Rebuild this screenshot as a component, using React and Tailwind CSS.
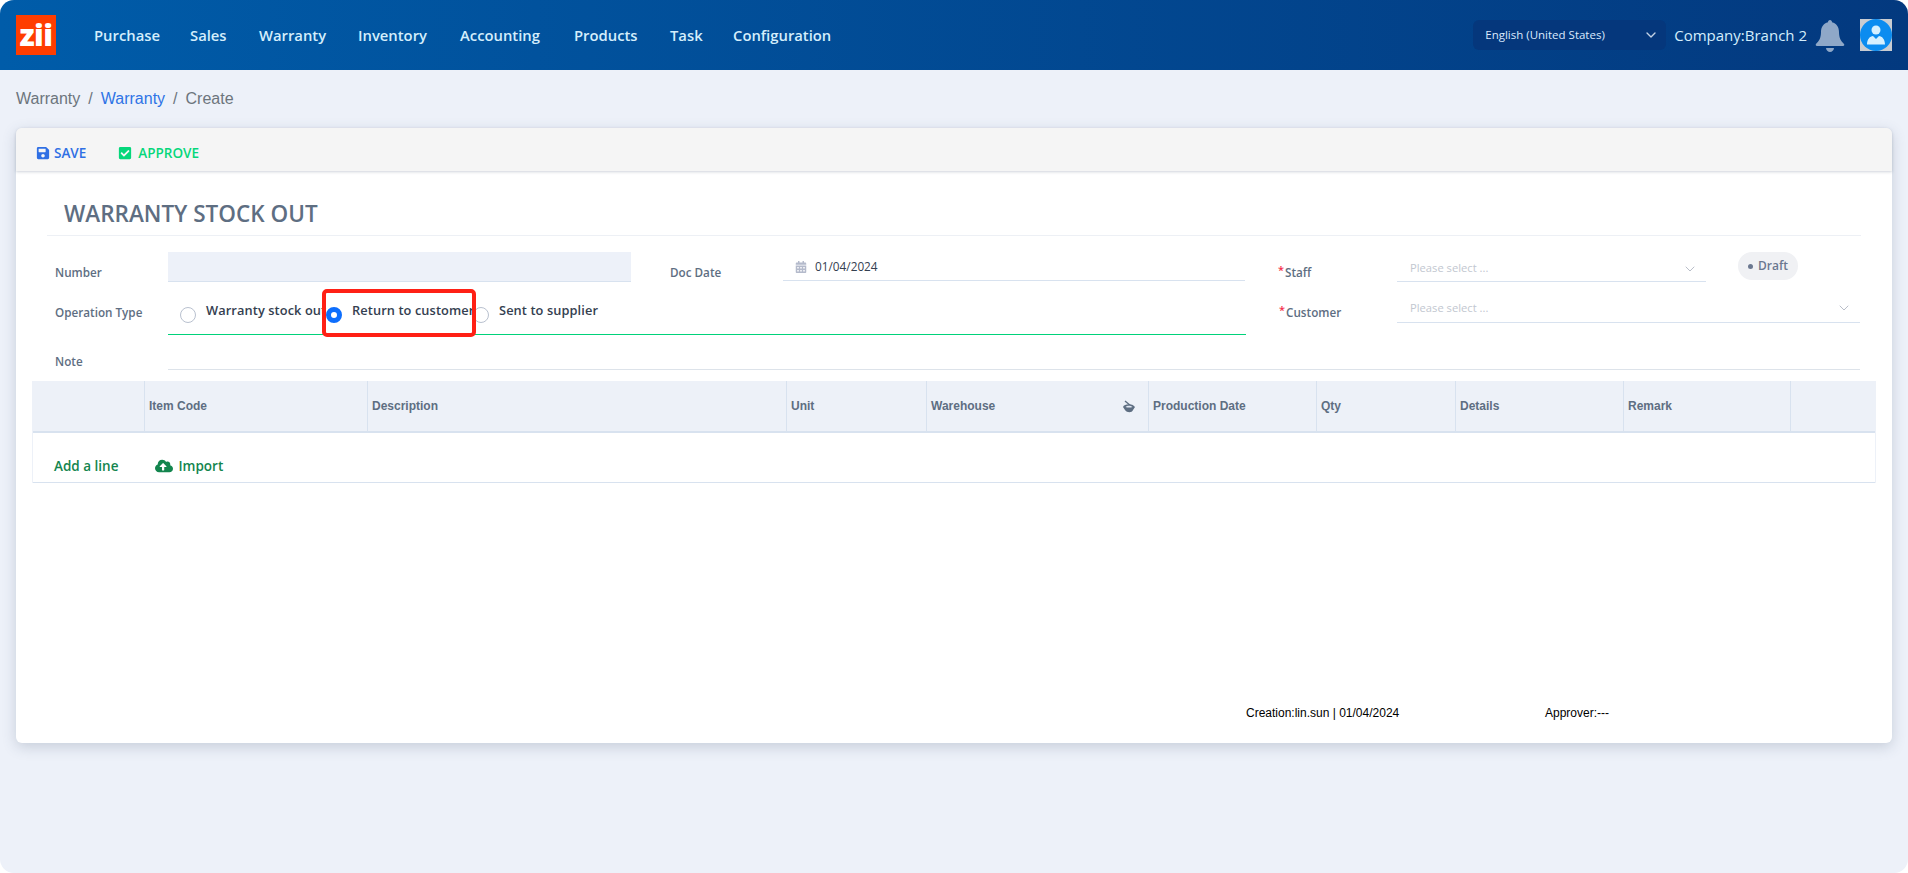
import { ChevronDown } from 'lucide-react'
import { FaCalendarAlt, FaCheckSquare, FaCloudUploadAlt, FaSave } from 'react-icons/fa'

const navItems = [
  { label: 'Purchase', width: 'w-[96px]' },
  { label: 'Sales', width: 'w-[69px]' },
  { label: 'Warranty', width: 'w-[99px]' },
  { label: 'Inventory', width: 'w-[102px]' },
  { label: 'Accounting', width: 'w-[114px]' },
  { label: 'Products', width: 'w-[96px]' },
  { label: 'Task', width: 'w-[63px]' },
  { label: 'Configuration', width: 'w-auto' },
]

const columns = [
  { label: '', width: 'w-[112px]' },
  { label: 'Item Code', width: 'w-[223px]' },
  { label: 'Description', width: 'w-[419px]' },
  { label: 'Unit', width: 'w-[140px]' },
  { label: 'Warehouse', width: 'w-[222px]', icon: true },
  { label: 'Production Date', width: 'w-[168px]' },
  { label: 'Qty', width: 'w-[139px]' },
  { label: 'Details', width: 'w-[168px]' },
  { label: 'Remark', width: 'w-[167px]' },
  { label: '', width: 'flex-1' },
]

function Label({ children, required, className }) {
  return (
    <div className={`shrink-0 text-[11.7px] font-semibold text-[#5e6e82] ${className}`}>
      <span className="relative">
        {required && <span className="absolute left-[-7px] top-[-2px] text-[11px] text-[#f5324b]">*</span>}
        {children}
      </span>
    </div>
  )
}

function Radio({ checked, label, className }) {
  return (
    <div className={`flex items-start ${className}`}>
      {checked ? (
        <span className="mt-[6px] h-[16px] w-[16px] shrink-0 rounded-full border-[5px] border-[#0d6efd] bg-white" />
      ) : (
        <span className="mt-[6px] h-[16px] w-[16px] shrink-0 rounded-full border border-[#b9c1cf] bg-white" />
      )}
      <span className="ml-[10px] whitespace-nowrap text-[12.8px] font-semibold leading-[18px] tracking-[0.1px] text-[#344050]">
        {label}
      </span>
    </div>
  )
}

function SelectField({ className }) {
  return (
    <div className={`flex items-center justify-between border-b border-[#d8e2ef] pl-[13px] pr-[8px] pt-[4px] ${className}`}>
      <span className="text-[11.2px] text-[#c2c7d0]">Please select ...</span>
      <ChevronDown size={16} strokeWidth={1.5} className="text-[#b9bec9]" />
    </div>
  )
}

function BellIcon() {
  return (
    <svg viewBox="0 0 30 33" className="h-[33px] w-[30px] fill-[#8fa8c8]">
      <path d="M15 1c-1.2 0-2 1-2 2.2C8.5 4.2 6 8 6 13c0 6-2 9-5 12-.6.7-.3 2 1 2h26c1.3 0 1.6-1.3 1-2-3-3-5-6-5-12 0-5-2.5-8.8-7-9.8C17 2 16.2 1 15 1z" />
      <path d="M11 29h8c0 2-2 4-4 4s-4-2-4-4z" />
    </svg>
  )
}

function BucketIcon() {
  return (
    <svg viewBox="0 0 14 13" className="h-[13px] w-[14px]">
      <path d="M3 1l6 5" fill="none" stroke="#5e6e82" strokeWidth="1.4" />
      <path d="M1 7c1-3 9-4 12 0l-2 3c-1 3-6 3-8 0z" fill="#5e6e82" />
      <path d="M3.5 7c1.5-1.4 5-1.6 7 0-2 .8-5 .8-7 0z" fill="#dfe6f1" />
    </svg>
  )
}

function Avatar() {
  return (
    <div className="h-[32px] w-[32px] bg-[#c9ccd1]">
      <svg viewBox="0 0 32 32" className="h-full w-full">
        <circle cx="16" cy="16" r="16" fill="#0b8cf0" />
        <circle cx="16" cy="11" r="4.5" fill="#d5f0ff" />
        <path d="M7 25.5c0-5 3-8.500 6-8.500l3 3 3-3c3 0 6 3.500 6 8.500z" fill="#d5f0ff" />
      </svg>
    </div>
  )
}

export default function App() {
  return (
    <div className="h-[873px] w-full overflow-hidden rounded-[14px] bg-[#edf1f9] font-['Open_Sans',sans-serif]">
      <header className="flex h-[70px] items-center bg-gradient-to-r from-[#005ca9] to-[#03397f] pl-[16px] pr-[16px]">
        <div className="flex h-[40px] w-[40px] items-end justify-center bg-[#ff3d00] pb-[3px] text-[30px] font-extrabold leading-[34px] tracking-[-0.5px] text-white">
          zii
        </div>
        <nav className="ml-[38px] flex items-center pt-[1px]">
          {navItems.map((item) => (
            <div key={item.label} className={`${item.width} text-[14.8px] font-semibold text-[#d4eefc]`}>
              {item.label}
            </div>
          ))}
        </nav>
        <div className="ml-auto flex items-center">
          <div className="flex h-[30px] w-[193px] items-center justify-between rounded-[6px] bg-[#05377c] pl-[12px] pr-[7px] text-[11.5px] text-[#dbeafe]">
            English (United States)
            <ChevronDown size={16} className="text-[#c5d3e6]" />
          </div>
          <div className="ml-[8px] text-[15px] text-[#d4eefc]">Company:Branch 2</div>
          <div className="ml-[8px]">
            <BellIcon />
          </div>
          <div className="ml-[15px]">
            <Avatar />
          </div>
        </div>
      </header>

      <div className="flex h-[58px] items-center gap-[8px] px-[16px] font-['Liberation_Sans',sans-serif] text-[16px] text-[#6c757d]">
        <span>Warranty</span>
        <span>/</span>
        <span className="text-[#2f74e6]">Warranty</span>
        <span>/</span>
        <span>Create</span>
      </div>

      <main className="mx-[16px] flex h-[615px] flex-col rounded-[6px] bg-white shadow-[0_4px_14px_rgba(65,80,110,0.22)]">
        <div className="flex h-[43px] items-center rounded-t-[6px] bg-[#f5f5f5] pl-[20px] pt-[7px] shadow-[0_1px_3px_rgba(65,80,110,0.25)]">
          <button className="flex items-center gap-[4px] text-[13.5px] font-semibold text-[#2f6fe4]">
            <FaSave size={14} />
            SAVE
          </button>
          <button className="ml-[32px] flex items-center gap-[6px] text-[13.5px] font-semibold text-[#06d77b]">
            <FaCheckSquare size={14} />
            APPROVE
          </button>
        </div>

        <div className="mx-[31px] mt-[24px] h-[41px] border-b border-[#edf0f5] pl-[17px] pt-[4px] text-[22.5px] font-semibold leading-[30px] text-[#5e6e82]">
          WARRANTY STOCK OUT
        </div>

        {/* form rows */}
        <div className="ml-[39px] mr-[32px] mt-[16px] flex h-[30px]">
          <Label className="w-[113px] pt-[12px]">Number</Label>
          <div className="h-[30px] w-[463px] border-b border-[#d8e2ef] bg-[#edf1f9]" />
          <Label className="ml-[39px] w-[113px] pt-[12px]">Doc Date</Label>
          <div className="flex h-[29px] w-[462px] items-center border-b border-[#d8e2ef] pl-[12px] pt-[1px] text-[11.8px] text-[#344050]">
            <FaCalendarAlt size={12} className="text-[#b4bacb]" />
            <span className="ml-[8px]">01/04/2024</span>
          </div>
          <Label required className="ml-[40px] w-[112px] pt-[12px]">Staff</Label>
          <SelectField className="h-[30px] w-[309px]" />
          <div className="ml-[32px] flex h-[28px] w-[60px] items-center justify-center gap-[5px] rounded-[14px] bg-[#f0f1f4] text-[12px] font-semibold text-[#6b7890]">
            <span className="h-[5px] w-[5px] rounded-full bg-[#6b7890]" />
            Draft
          </div>
        </div>

        <div className="ml-[39px] mr-[32px] mt-[8px] flex h-[45px]">
          <Label className="w-[113px] pt-[14px]">Operation Type</Label>
          <div className="relative flex h-[45px] w-[1078px] border-b border-[#00d27a] pl-[12px] pt-[11px]">
            <Radio label="Warranty stock out" className="w-[146px]" />
            <Radio checked label="Return to customer" className="w-[147px]" />
            <Radio label="Sent to supplier" />
            {/* annotation over the radios */}
            <div className="absolute left-[154px] top-[-1px] h-[48px] w-[154px] rounded-[5px] border-[4px] border-[#ff2015]" />
          </div>
          <Label required className="ml-[40px] w-[111px] pt-[14px]">Customer</Label>
          <SelectField className="h-[33px] w-[463px]" />
        </div>

        <div className="ml-[39px] mr-[32px] mt-[10px] flex h-[25px]">
          <Label className="w-[113px] pt-[8px]">Note</Label>
          <div className="h-[25px] flex-1 border-b border-[#dde3ea]" />
        </div>

        <div className="mx-[16px] mt-[11px] border-x border-[#edf1f8]">
          <div className="flex h-[52px] border-b-2 border-[#d8e2ef] bg-[#edf1f8] font-['Liberation_Sans',sans-serif] text-[12px] font-bold text-[#5e6e82]">
            {columns.map((col, i) => (
              <div
                key={i}
                className={`${col.width} flex items-center justify-between border-r border-[#d8e2ef] pl-[4px] last:border-r-0 ${col.icon ? 'pr-[12px]' : 'pr-[9px]'}`}
              >
                {col.label}
                {col.icon && <BucketIcon />}
              </div>
            ))}
          </div>
          <div className="flex h-[50px] items-end border-b border-[#d8e2ef] pb-[6px] pl-[21px] text-[13.5px] font-semibold text-[#13854e]">
            <span>Add a line</span>
            <span className="ml-[37px] flex items-center gap-[5px]">
              <FaCloudUploadAlt size={18} />
              Import
            </span>
          </div>
        </div>

        <div className="mt-auto flex pb-[21px] pl-[1230px] font-['Liberation_Sans',sans-serif] text-[12px] text-black">
          <span className="w-[299px]">Creation:lin.sun | 01/04/2024</span>
          <span>Approver:---</span>
        </div>
      </main>
    </div>
  )
}
